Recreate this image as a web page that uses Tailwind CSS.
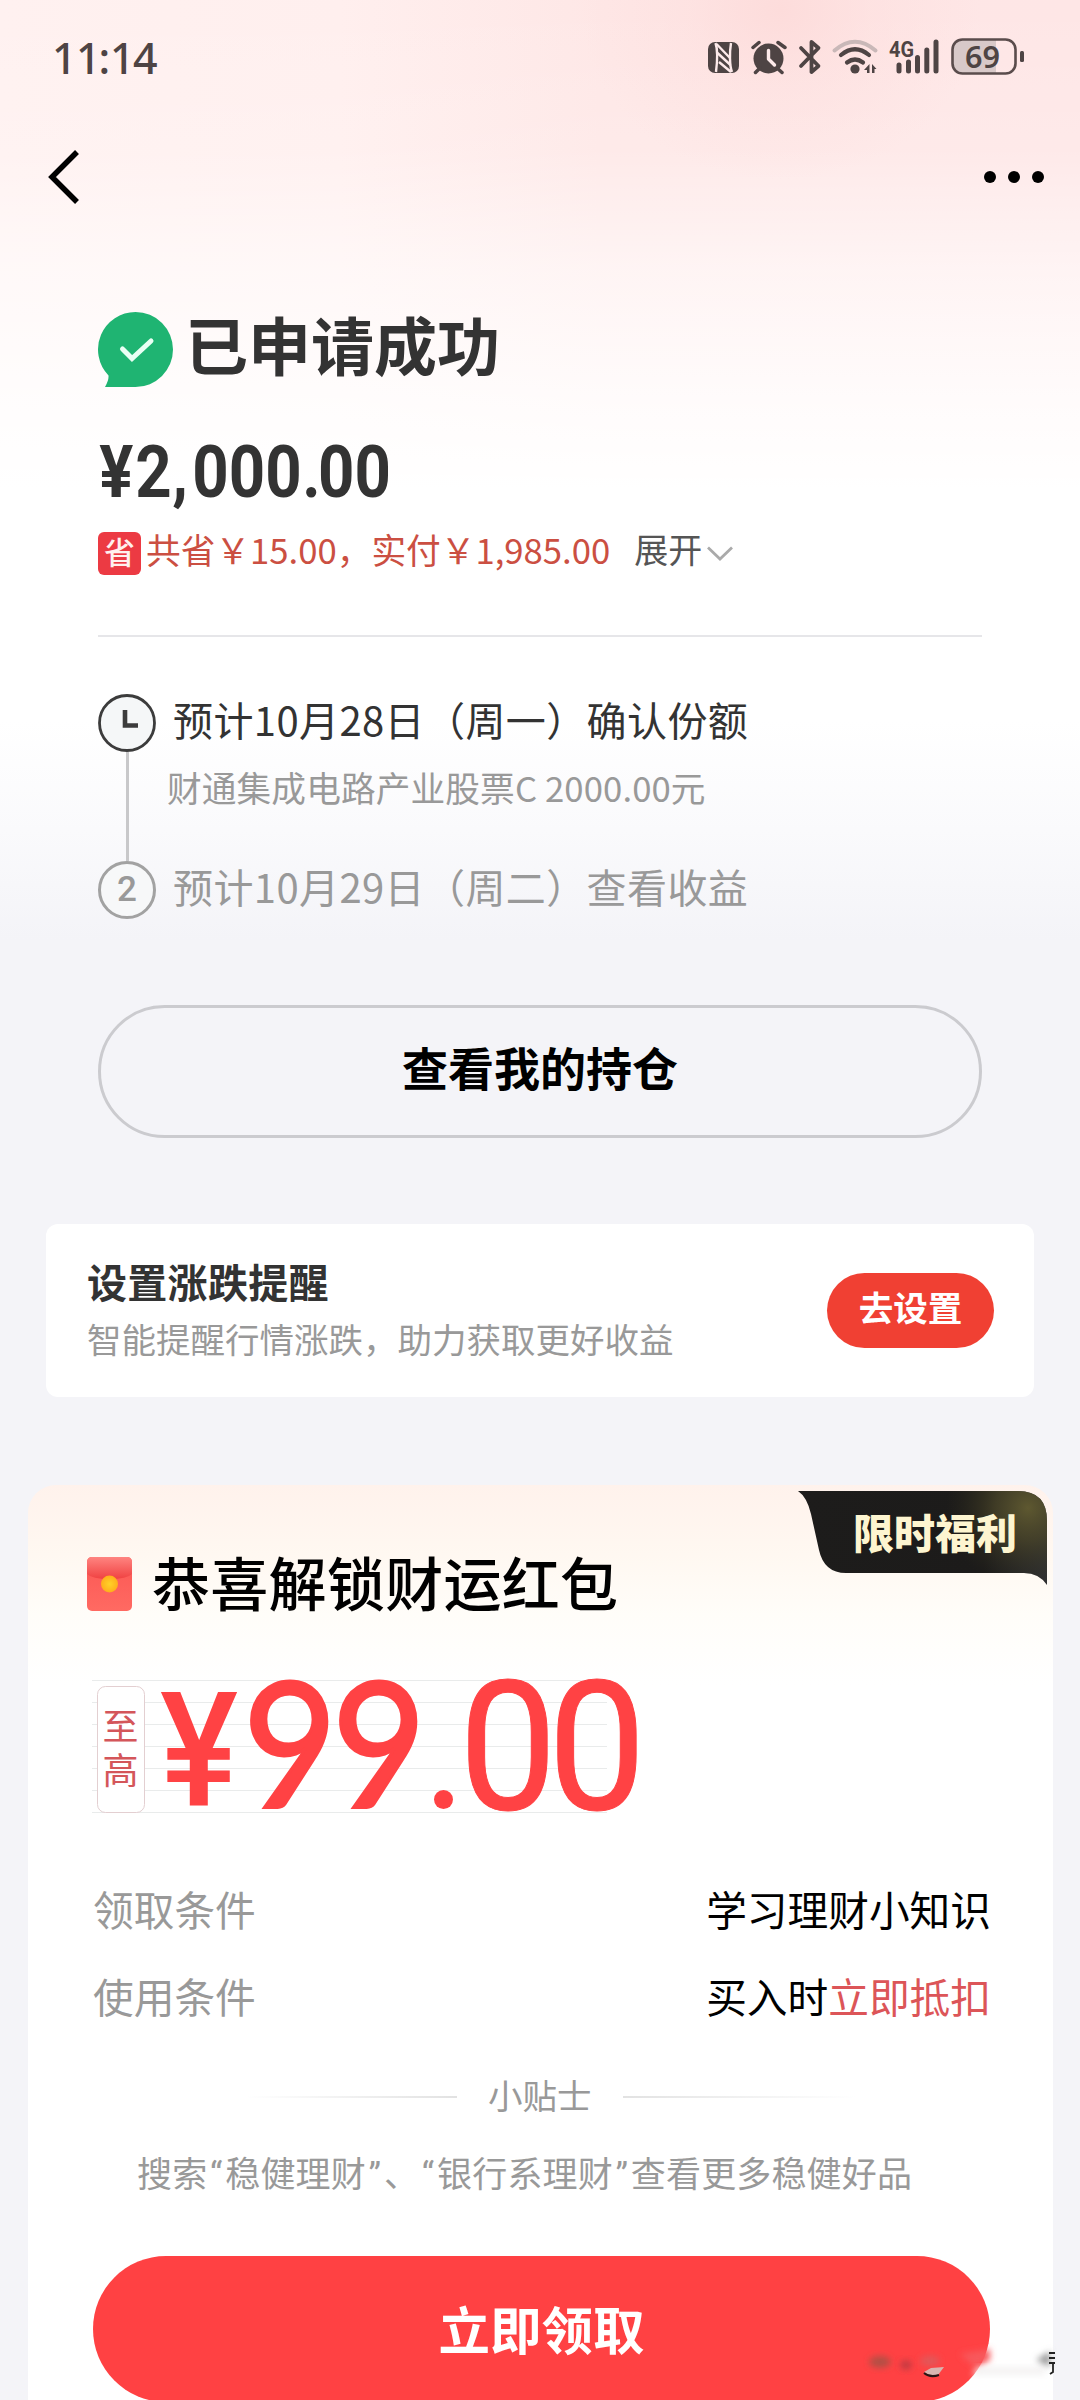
<!DOCTYPE html>
<html lang="zh-CN">
<head>
<meta charset="utf-8">
<title>已申请成功</title>
<script src="https://cdn.jsdelivr.net/npm/@tailwindcss/browser@4"></script>
</head>
<body class="bg-[#f4f4f8]">
<div class="w-[1080px] h-[2400px] overflow-hidden relative flex flex-col font-['Noto_Sans_CJK_SC',sans-serif] text-[#333] bg-[linear-gradient(180deg,transparent_0,transparent_720px,#fafafc_830px,#f4f4f8_940px),radial-gradient(ellipse_200px_170px_at_780px_10px,#fddcdb_0,#fddcdb66_45%,transparent_100%),linear-gradient(180deg,transparent_0,#ffffff22_150px,#ffffff90_270px,#ffffffd8_400px,#fff_490px),linear-gradient(90deg,#fff1f0_0,#ffefee_340px,#fee7e6_600px,#fee6e6_1080px)]">

  <!-- status bar -->
  <div class="h-[114px] shrink-0 flex items-center justify-between pl-12 pr-10">
    <svg class="overflow-visible" width="120" height="60" viewBox="48 27 120 60" fill="#4e4444">
      <text font-family="Noto Sans" font-weight="500" font-size="43" y="73.5" x="52 76 98.5 110 133">11:14</text>
    </svg>
    <svg width="340" height="60" viewBox="700 27 340 60" fill="#4e4444">
      <rect x="708" y="42" width="31" height="31" rx="7"/>
      <path d="M715.500 43C718 50 717 64 716 72M731 43C729.500 52 729.500 66 732 72" stroke="#fdeaea" stroke-width="2.400" fill="none"/>
      <path d="M716.500 44L730 58M717.500 53L730.500 65M719 62L731 72" stroke="#fdeaea" stroke-width="2.400" fill="none"/>
      <circle cx="768.500" cy="58.500" r="15"/>
      <path d="M753 47.500L759 42.500M778 42.500L785 47.500" stroke="#4e4444" stroke-width="3.500" stroke-linecap="round"/>
      <path d="M760 68L755.500 72.500M777 68L782 72.500" stroke="#4e4444" stroke-width="3.500" stroke-linecap="round"/>
      <path d="M768.500 50.500V59L774.500 65" stroke="#fdeaea" stroke-width="3.400" stroke-linecap="round" stroke-linejoin="round" fill="none"/>
      <path d="M801 48L818.500 66L811.500 72V42L818.500 48L801 66" stroke="#4e4444" stroke-width="3.800" stroke-linecap="round" stroke-linejoin="round" fill="none"/>
      <path d="M834.500 50.500Q855 33 875.500 50.500" stroke="#c9b8b8" stroke-width="4" stroke-linecap="round" fill="none"/>
      <path d="M841 55Q855 43.500 869 55M847 62.500Q855 56.500 863 62.500" stroke="#4e4444" stroke-width="4.200" stroke-linecap="round" fill="none"/>
      <circle cx="855" cy="69" r="4.600"/>
      <path d="M869.500 64V73H867V70H864ZM872 64L876.500 69H874.500V73H872Z"/>
      <text font-family="Roboto" font-weight="700" font-size="22.500" y="57" x="889" textLength="25" lengthAdjust="spacingAndGlyphs">4G</text>
      <rect x="896.500" y="62.500" width="5" height="11" rx="2.500"/><rect x="906" y="59.500" width="5" height="14" rx="2.500"/><rect x="915" y="55" width="5" height="18.500" rx="2.500"/><rect x="924.300" y="47.500" width="5" height="26" rx="2.500"/><rect x="933.500" y="39.500" width="5" height="34" rx="2.500"/>
      <path d="M961 39H996V74H961Q952 74 952 65V48Q952 39 961 39Z" fill="#d8c9c9"/>
      <rect x="952.500" y="39.500" width="63" height="34" rx="10" fill="none" stroke="#5a4c4c" stroke-width="2.600"/>
      <rect x="1020" y="51" width="4" height="11" rx="1.500"/>
      <text font-family="Noto Sans" font-weight="600" font-size="31" y="67.500" x="965" textLength="35" lengthAdjust="spacingAndGlyphs">69</text>
    </svg>
  </div>

  <!-- navigation -->
  <div class="h-[126px] shrink-0 flex items-center justify-between pl-11 pr-9">
    <svg width="40" height="64" viewBox="44 145 40 64"><path d="M77 152L52 177L77 202" fill="none" stroke="#000" stroke-width="5.500"/></svg>
    <svg width="64" height="24" viewBox="980 165 64 24"><circle cx="990" cy="177" r="6"/><circle cx="1014" cy="177" r="6"/><circle cx="1038" cy="177" r="6"/></svg>
  </div>

  <!-- result -->
  <div class="mt-[72px] ml-[98px] h-[75px] shrink-0 flex items-start gap-[12px]">
    <svg width="75" height="75" viewBox="0 0 75 75"><path d="M37.500 0A37.500 37.500 0 0 1 37.500 75H7Q11 68 10.500 63.500A37.500 37.500 0 0 1 37.500 0Z" fill="#1fb472"/><path d="M24.500 37L34 46.500L53 29" fill="none" stroke="#e9fff4" stroke-width="5" stroke-linecap="round"/></svg>
    <h1 class="text-[63px] leading-[62px] font-bold">已申请成功</h1>
  </div>
  <svg class="mt-[43px] ml-[98px] shrink-0 overflow-visible" width="300" height="80" viewBox="98 430 300 80" fill="#333">
    <g transform="scale(.87 1)"><text font-family="Roboto" font-weight="700" font-size="73" y="497.500" x="114 155.500 198 221 263 305 347.500 365.500 407.500">¥2,000.00</text></g>
  </svg>
  <div class="mt-[22px] ml-[98px] h-[43px] shrink-0 flex items-start text-[34.7px] leading-[34px]">
    <span class="w-[43px] h-[43px] rounded-md bg-[#ec3a43] text-[#fff0ee] text-[31px] leading-[38px] text-center font-medium">省</span>
    <span class="ml-[5px] text-[#cb4f42]">共省￥15.00，实付￥1,985.00</span>
    <span class="ml-[24px] text-[#555] text-[34px]">展开</span>
    <svg class="mt-[13px] ml-[4px]" width="28" height="18" viewBox="0 0 28 18"><path d="M2 2.500L14 14L26 2.500" fill="none" stroke="#aaa" stroke-width="2.800"/></svg>
  </div>
  <div class="mt-[60px] mx-[98px] h-[2px] shrink-0 bg-[#e6e6e9]"></div>

  <!-- progress -->
  <div class="mt-[57px] ml-[98px] h-[225px] shrink-0 flex">
    <div class="w-[58px] flex flex-col items-center">
      <svg width="58" height="58" viewBox="0 0 58 58"><circle cx="29" cy="29" r="27.500" fill="#f5f7f8" stroke="#3c3c3c" stroke-width="2.800"/><path d="M27 16V31.500H40" fill="none" stroke="#3c3c3c" stroke-width="4.600"/></svg>
      <div class="w-[3px] h-[109px] bg-[#c8c8ca]"></div>
      <div class="w-[58px] h-[58px] rounded-full border-[3px] border-[#a2a2a2] bg-[#f7f8f9] text-[#999] text-center text-[35px] leading-[52px] font-medium font-['Roboto',sans-serif]">2</div>
    </div>
    <div class="pl-[11px] flex flex-col">
      <div class="pl-[6px] text-[40px] leading-[50px] tracking-[0.4px]">预计10月28日（周一）确认份额</div>
      <div class="mt-[18px] text-[34.7px] leading-[50px] tracking-[0.1px] text-[#999]">财通集成电路产业股票C 2000.00元</div>
      <div class="mt-[49px] pl-[6px] text-[40px] leading-[50px] tracking-[0.4px] text-[#999]">预计10月29日（周二）查看收益</div>
    </div>
  </div>

  <button class="mt-[86px] mx-[98px] h-[133px] shrink-0 rounded-full border-[3px] border-[#cbcbcf] pb-[12px] text-[46px] leading-[60px] font-bold text-black">查看我的持仓</button>

  <!-- reminder -->
  <section class="mt-[86px] mx-[46px] h-[173px] shrink-0 rounded-xl bg-white flex justify-between pl-[41px] pr-[40px]">
    <div class="pt-[32px]">
      <div class="text-[40px] leading-[50px] font-bold tracking-[0.3px]">设置涨跌提醒</div>
      <div class="mt-[12px] text-[34.5px] leading-[40px] text-[#999]">智能提醒行情涨跌，助力获取更好收益</div>
    </div>
    <button class="mt-[49px] w-[167px] h-[75px] rounded-full bg-[#f04033] text-white text-[34.5px] font-bold leading-[40px] pb-[9px]">去设置</button>
  </section>

  <!-- coupon -->
  <section class="relative mt-[88px] ml-[28px] w-[1025px] h-[930px] shrink-0 rounded-t-[28px] flex flex-col bg-[linear-gradient(180deg,#fff2ec_0,#fff8f1_70px,#fffdf9_130px,#fff_200px)]">
    <svg class="absolute top-[6px] right-[6px]" width="249" height="94" viewBox="798 1491 249 94">
      <defs>
        <linearGradient id="rb" x1="0" y1="0" x2="1" y2="0"><stop offset="0" stop-color="#1d1c1b"/><stop offset=".75" stop-color="#1c1b1a"/><stop offset="1" stop-color="#2f3034"/></linearGradient>
        <radialGradient id="rg" gradientUnits="userSpaceOnUse" cx="1028" cy="1508" r="82"><stop offset="0" stop-color="#5e5830"/><stop offset=".4" stop-color="#4a4528" stop-opacity=".75"/><stop offset="1" stop-color="#2c2a1c" stop-opacity="0"/></radialGradient>
      </defs>
      <path d="M798 1491H1018Q1047 1491 1047 1521V1585Q1039 1573 1024 1573H846Q824 1573 819 1550L811 1514Q807 1497 798 1491Z" fill="url(#rb)"/>
      <path d="M798 1491H1018Q1047 1491 1047 1521V1585Q1039 1573 1024 1573H846Q824 1573 819 1550L811 1514Q807 1497 798 1491Z" fill="url(#rg)"/>
      <text font-family="Noto Sans CJK SC" font-weight="900" font-size="41" x="853" y="1549" textLength="164" fill="#fdf5d0">限时福利</text>
    </svg>

    <div class="mt-[72px] pl-[59px] h-[54px] shrink-0 flex items-start gap-[20px]">
      <svg width="45" height="54" viewBox="0 0 45 54">
        <defs><linearGradient id="en" x1="0" y1="0" x2="0" y2="1"><stop offset="0" stop-color="#fb5754"/><stop offset="1" stop-color="#ff6a62"/></linearGradient>
        <linearGradient id="fl" x1="0" y1="0" x2="0" y2="1"><stop offset="0" stop-color="#ff8480"/><stop offset="1" stop-color="#f04242"/></linearGradient>
        <radialGradient id="co"><stop offset="0" stop-color="#ffd229"/><stop offset="1" stop-color="#ffae1c"/></radialGradient></defs>
        <rect width="45" height="54" rx="5" fill="url(#en)"/><path d="M0 5Q0 0 5 0H40Q45 0 45 5V17Q40 22 22.500 22Q5 22 0 17Z" fill="url(#fl)"/><circle cx="22.500" cy="27" r="8.500" fill="url(#co)"/>
      </svg>
      <h2 class="text-[58px] leading-[48px] font-medium tracking-[0.3px] text-black">恭喜解锁财运红包</h2>
    </div>

    <svg class="mt-[65px] ml-[64px] shrink-0 overflow-visible" width="560" height="140" viewBox="92 1676 560 140">
      <path d="M92 1680.500H607M92 1702.500H607M92 1724.500H607M92 1746.500H607M92 1768.500H607M92 1790.500H607M92 1812.500H607" stroke="#e9ebeb"/>
      <rect x="97.500" y="1686.500" width="47" height="126" rx="8" fill="#fff" stroke="#e3cfd1"/>
      <g font-family="Noto Sans CJK SC" font-size="36" fill="#d4565a"><text x="102.500" y="1740">至</text><text x="102.500" y="1784">高</text></g>
      <g fill="#ff4244">
        <g transform="translate(160 1805) scale(.92 1)"><text font-family="Roboto" font-weight="500" font-size="160" x="0" y="0">¥</text></g>
        <g font-family="Lato" font-weight="400" font-size="174" stroke="#ff4244" stroke-width="3"><text x="243" y="1806.500" textLength="94" lengthAdjust="spacingAndGlyphs">9</text><text x="332" y="1806.500" textLength="94" lengthAdjust="spacingAndGlyphs">9</text></g>
        <circle cx="443.500" cy="1799.500" r="9.500"/>
        <g font-family="Roboto" font-weight="400" font-size="180" stroke="#ff4244" stroke-width="1"><text x="459" y="1809" textLength="98" lengthAdjust="spacingAndGlyphs">0</text><text x="548" y="1809" textLength="98" lengthAdjust="spacingAndGlyphs">0</text></g>
      </g>
    </svg>

    <div class="mt-[68px] pl-[65px] pr-[62px] flex justify-between text-[40.7px] leading-[50px]"><span class="text-[#999]">领取条件</span><span class="text-black">学习理财小知识</span></div>
    <div class="mt-[37px] pl-[65px] pr-[62px] flex justify-between text-[40.7px] leading-[50px]"><span class="text-[#999]">使用条件</span><span class="text-black">买入时<span class="text-[#dc5558]">立即抵扣</span></span></div>

    <div class="mt-[53px] pl-[217px] flex items-center text-[34.5px] leading-[40px] text-[#999]">
      <i class="w-[212px] h-[2px] mt-[5px] bg-linear-to-r from-transparent to-[#e2e2e2]"></i>
      <span class="mx-[31px]">小贴士</span>
      <i class="w-[233px] h-[2px] mt-[5px] bg-linear-to-l from-transparent to-[#e2e2e2]"></i>
    </div>
    <p class="mt-[38px] pl-[109px] h-[40px] shrink-0 whitespace-nowrap text-[35px] leading-[40px] tracking-[0.15px] text-[#999]">搜索<span class="inline-block w-[18px] text-center font-['Roboto']">“</span>稳健理财<span class="inline-block w-[18px] text-center font-['Roboto']">”</span>、<span class="inline-block w-[18px] text-center font-['Roboto']">“</span>银行系理财<span class="inline-block w-[18px] text-center font-['Roboto']">”</span>查看更多稳健好品</p>

    <button class="mt-[64px] ml-[65px] w-[897px] h-[146px] shrink-0 rounded-full bg-[#ff4143] text-white text-[51.5px] leading-[60px] font-bold pb-[3px]">立即领取</button>

    <!-- smudge at the lower right corner -->
    <svg class="absolute left-[812px] top-[855px]" width="220" height="60" viewBox="840 2340 220 60">
      <defs><filter id="b" x="-50%" y="-50%" width="200%" height="200%"><feGaussianBlur stdDeviation="3"/></filter></defs>
      <path d="M960 2354L990 2349V2360L976 2368Z" fill="#f8585c" filter="url(#b)"/>
      <ellipse cx="880" cy="2362" rx="11" ry="6" fill="#b25045" filter="url(#b)"/>
      <ellipse cx="906" cy="2365" rx="6" ry="5" fill="#c23a42" filter="url(#b)"/>
      <ellipse cx="930" cy="2361" rx="10" ry="5" fill="#e0585a" filter="url(#b)"/>
      <path d="M978 2367H1045V2375H972Z" fill="#f4f3f3" filter="url(#b)"/>
      <path d="M924 2372L931 2368L944 2367L938 2375L930 2376Z" fill="#d8b5b0"/>
      <path d="M924 2373Q930 2378 939 2375" stroke="#2a1515" stroke-width="2" fill="none"/>
      <path d="M1036 2360L1050 2351V2367Z" fill="#999" filter="url(#b)"/>
      <path d="M1049 2353H1055M1049 2358H1055M1049 2363H1055M1053 2363V2372L1050 2374" stroke="#222" stroke-width="1.800" fill="none"/>
    </svg>
  </section>
</div>
</body>
</html>
